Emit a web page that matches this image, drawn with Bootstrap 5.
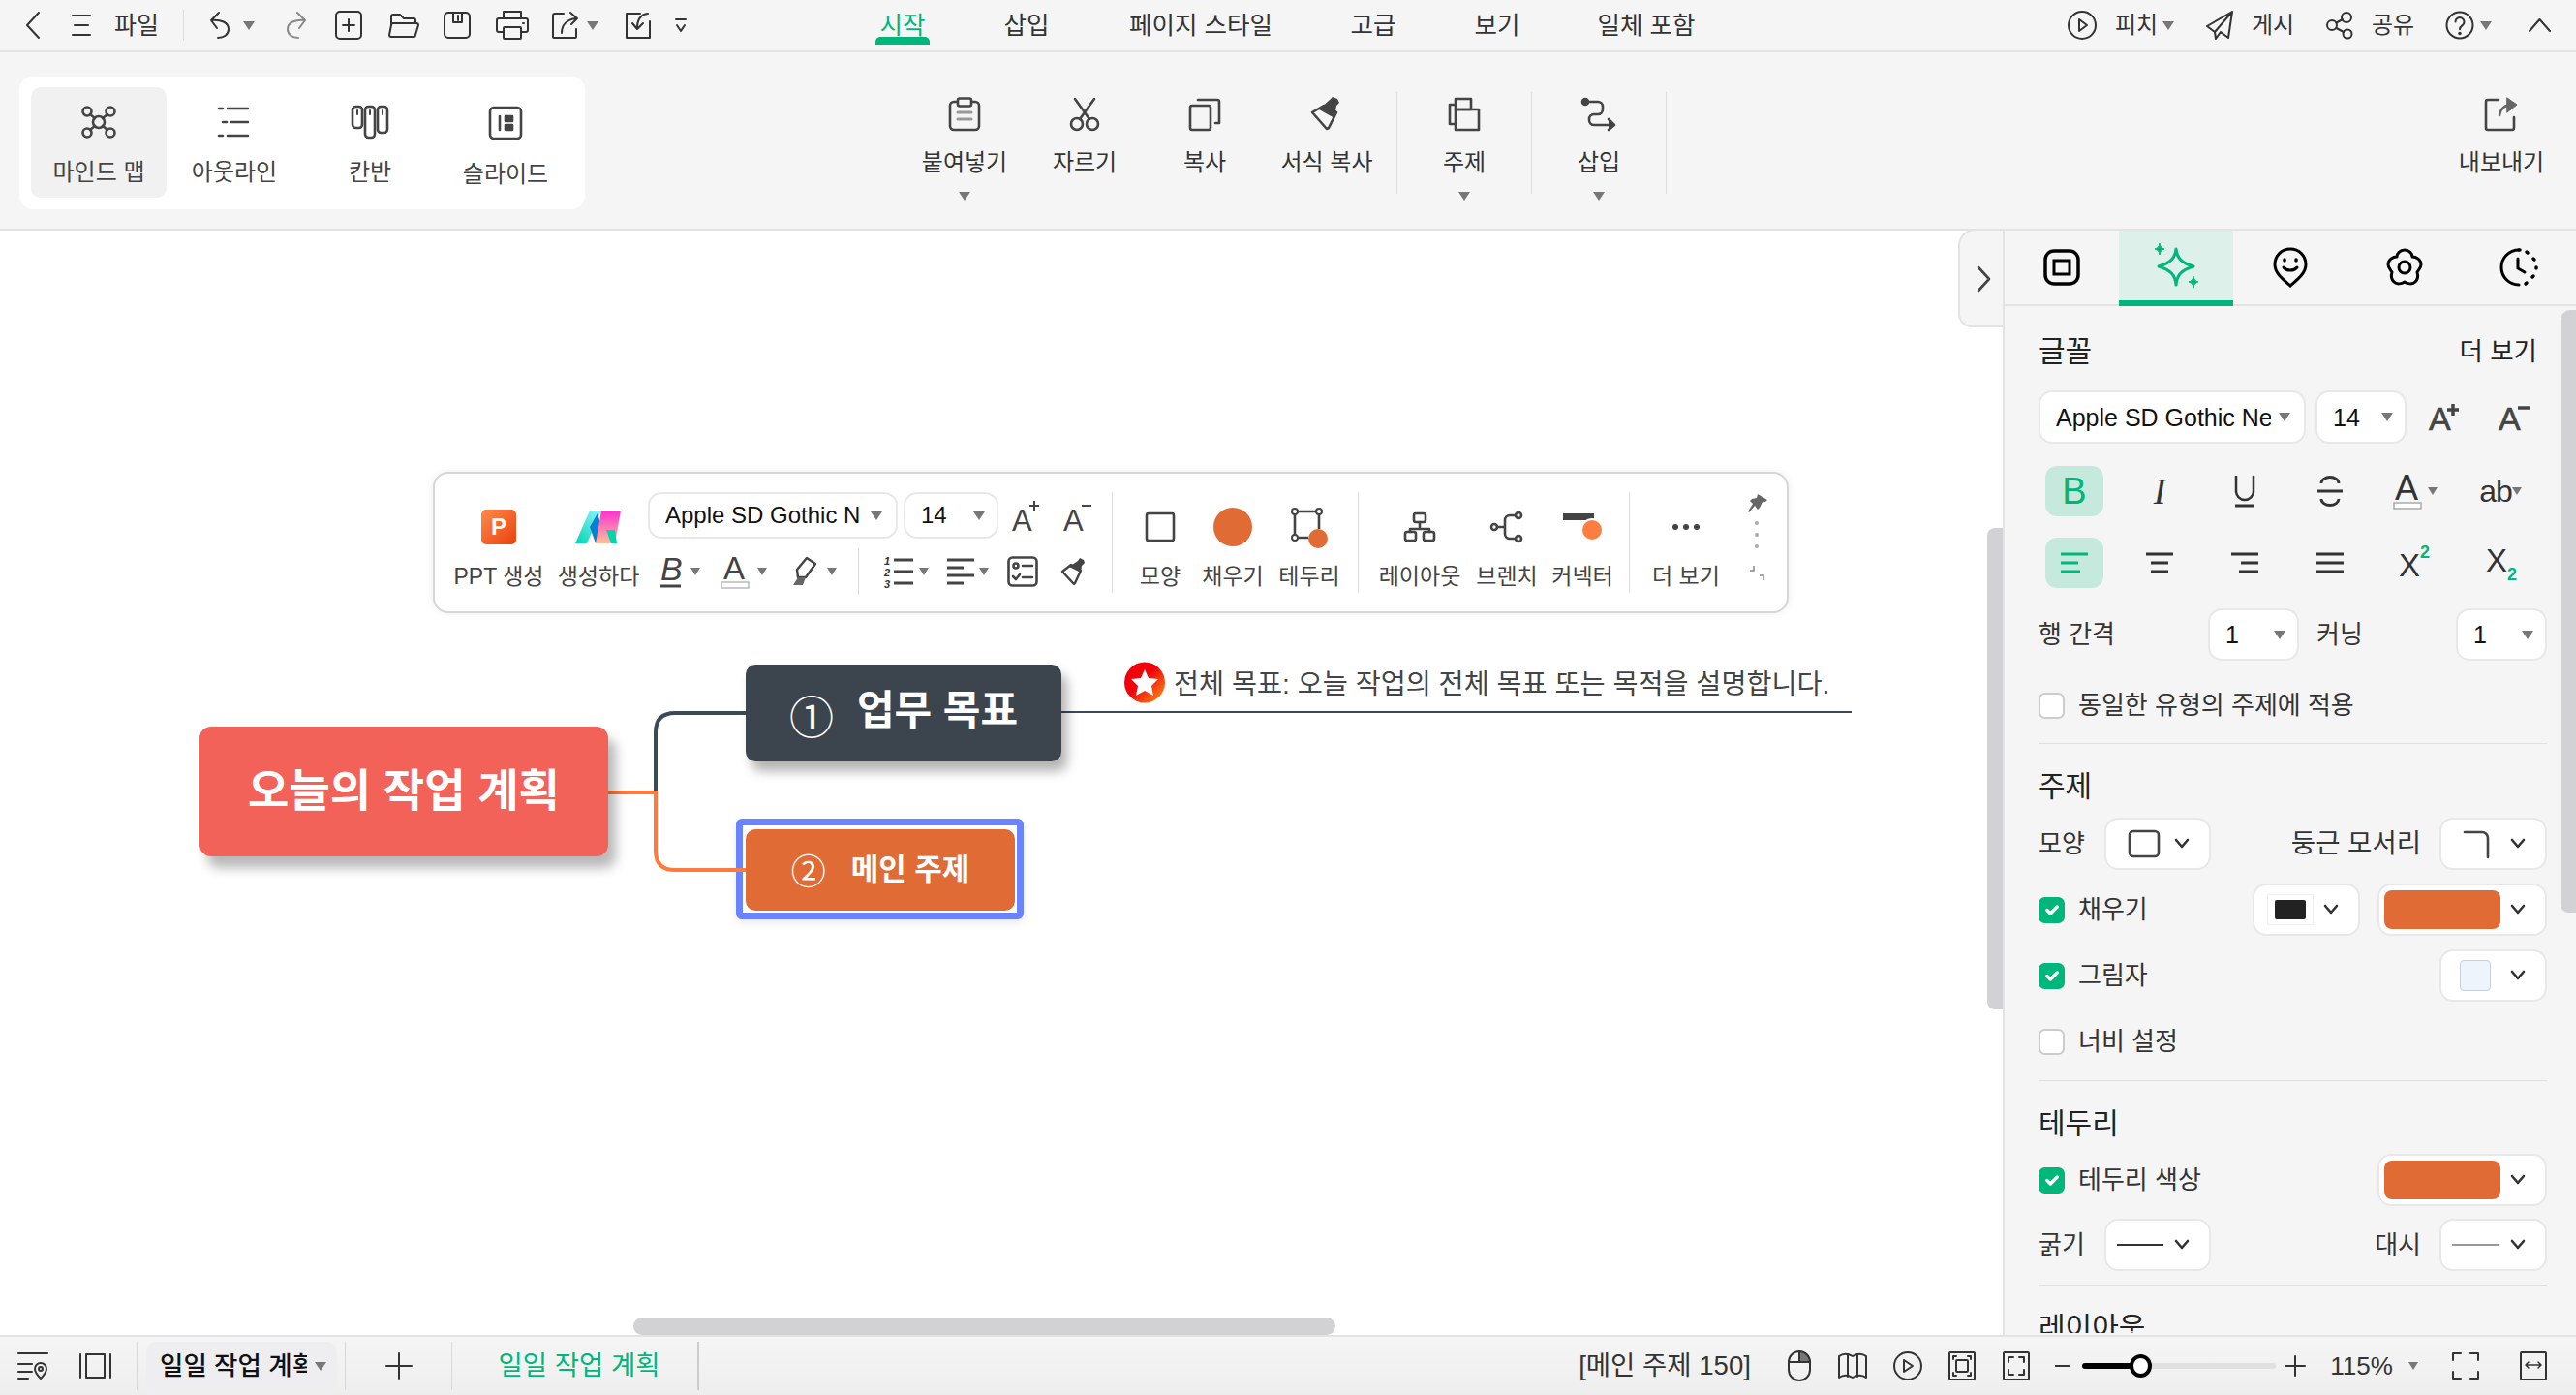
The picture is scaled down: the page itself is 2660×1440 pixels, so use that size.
<!DOCTYPE html>
<html lang="ko">
<head>
<meta charset="utf-8">
<title>일일 작업 계획</title>
<link href="https://cdn.jsdelivr.net/npm/bootstrap@5.3.0/dist/css/bootstrap.min.css" rel="stylesheet">
<style>
html,body{height:100%;margin:0;overflow:hidden}
body{font-family:"Liberation Sans","Noto Sans CJK KR",sans-serif;font-size:24px;color:#333;background:#f5f5f5;line-height:30px}
svg{display:block;flex-shrink:0;overflow:visible}
.ic{fill:none;stroke:#333;stroke-width:2;stroke-linecap:round;stroke-linejoin:round}
.ig{fill:none;stroke:#444;stroke-width:2.6;stroke-linecap:round;stroke-linejoin:round}
.ml4{margin-left:4px}.ml6{margin-left:6px}.ml7{margin-left:7px}.ml8{margin-left:8px}.ml10{margin-left:10px}.ml12{margin-left:12px}.ml13{margin-left:13px}.ml14{margin-left:14px}.ml15{margin-left:15px}.ml16{margin-left:16px}.ml17{margin-left:17px}.ml18{margin-left:18px}.ml19{margin-left:19px}.ml20{margin-left:20px}.ml21{margin-left:21px}.ml22{margin-left:22px}.ml23{margin-left:23px}.ml24{margin-left:24px}.ml25{margin-left:25px}.ml26{margin-left:26px}.ml27{margin-left:27px}.ml28{margin-left:28px}.ml29{margin-left:29px}.ml30{margin-left:30px}.ml32{margin-left:32px}.ml33{margin-left:33px}.ml35{margin-left:35px}.ml38{margin-left:38px}.ml40{margin-left:40px}.ml41{margin-left:41px}.ml42{margin-left:42px}.ml47{margin-left:47px}.ml70{margin-left:70px}.ml71{margin-left:71px}.ml72{margin-left:72px}
.w44{width:44px}.w46{width:46px}.w56{width:56px}.w57{width:57px}.w64{width:64px}.w68{width:68px}.w70{width:70px}.w74{width:74px}.w86{width:86px}.w90{width:90px}.w110{width:110px}.w160{width:160px}.w168{width:168px}.w178{width:178px}
.txt-cell{white-space:nowrap;text-align:center;flex-shrink:0;display:flex;justify-content:center}
.tri{width:0;height:0;border-left:6px solid transparent;border-right:6px solid transparent;border-top:9px solid #777;flex-shrink:0}
.tri-s{border-left-width:5px;border-right-width:5px;border-top-width:8px}
.vsep{width:1px;background:#dcdcdc;flex-shrink:0}

.topbar{height:54px;border-bottom:2px solid #e3e3e3;background:#f5f5f5;flex-shrink:0}
.top-left{width:904px;flex-shrink:0}
.top-sep{height:32px}
.tab-on{position:relative;color:#00b67a}
.tab-on::after{content:"";position:absolute;left:0;right:0;top:38px;height:8px;background:#00b67a;border-radius:5px 5px 0 0}
.tab-item{font-size:25.5px;line-height:52px;height:46px;margin-top:-6px}
.top-right{margin-left:380px}
.top-name{font-size:25px}

.ribbon{height:184px;border-bottom:2px solid #e3e3e3;background:#f5f5f5;flex-shrink:0}
.mode-card{margin:25px 0 0 20px;width:584px;height:137px;background:#fff;border-radius:14px;padding:11px 12px}
.mode-item{width:140px;height:114px;border-radius:10px;padding-top:19px;color:#444;font-size:24px}
.mode-on{background:#f1f1f1}
.mode-item span{margin-top:20px;line-height:30px}
.rib-group{margin-left:330px}
.rib-item{padding-top:46px;width:124px;color:#333;font-size:24px}
.rib-item svg{height:36px}
.rib-item span{margin-top:17px;line-height:30px;white-space:nowrap}
.rib-item .tri{margin-top:15px}
.rib-wide{width:128px}
.rib-topic{width:138px}
.rib-export{width:110px;margin-right:22px}
.rib-sep{height:105px;margin-top:41px}
.rib-sep-first{margin-left:8px}

.work{flex:1 1 auto;min-height:0}
.canvas-wrap{width:2068px;background:#fff;flex-shrink:0;position:relative;overflow:hidden}
.side{width:592px;flex-shrink:0;background:#f5f5f5;border-left:2px solid #e3e3e3;position:relative;overflow:hidden}

.side-handle{position:absolute;left:2022px;top:-2px;width:48px;height:102px;background:#f5f5f5;border:2px solid #e3e3e3;border-right:0;border-radius:18px 0 0 14px}
.side-handle svg{position:absolute;left:17px;top:37px}
.scroll-v{position:absolute;left:2052px;top:307px;width:16px;height:497px;background:#d2d2d4;border-radius:8px 0 0 8px}
.scroll-h{position:absolute;left:654px;top:1122px;width:725px;height:18px;background:#d2d2d4;border-radius:9px}
.links{position:absolute;left:0;top:0}
.node{position:absolute;color:#fff;font-weight:700;white-space:nowrap}
.node-root{left:206px;top:512px;width:422px;height:134px;background:#f26259;border-radius:12px;box-shadow:8px 12px 12px rgba(0,0,0,.28);font-size:46px;padding-bottom:2px}
.node-goal{left:770px;top:448px;width:326px;height:100px;background:#3c454e;border-radius:10px;box-shadow:6px 10px 12px rgba(0,0,0,.3);font-size:42px;padding-bottom:5px}
.node-main{left:770px;top:618px;width:278px;height:84px;background:#e06b35;border-radius:10px;font-size:31px}
.num-a{font-weight:400;font-size:46px;line-height:46px;margin-right:24px;margin-top:15px}
.num-b{font-weight:400;font-size:36px;line-height:36px;margin-right:26px;margin-top:6px}
.sel-frame{position:absolute;left:760px;top:607px;width:297px;height:104px;border:7px solid #6a84ff;border-radius:6px;background:#fff;box-shadow:0 4px 8px rgba(0,0,0,.08)}
.note-star{position:absolute;left:1161px;top:445px}
.note-text{position:absolute;left:1212px;top:448px;font-size:28.3px;line-height:40px;color:#444;white-space:nowrap}

.float-bar{position:absolute;left:447px;top:249px;width:1400px;height:146px;background:#fff;border:2px solid #d6d6d6;border-radius:16px;box-shadow:0 0 8px rgba(0,0,0,.08);color:#444;font-size:23px}
.fb-col{padding-top:35px;flex-shrink:0}
.fb-ico{height:40px}
.fb-col span{margin-top:16px;line-height:30px;white-space:nowrap}
.fb-ppt{margin-top:0;width:36px;height:36px;border-radius:5px;background:linear-gradient(135deg,#ff8a4a,#e8410f);color:#fff;font-weight:700;font-size:24px;line-height:36px;text-align:center}
.fb-fonts{width:479px;padding-top:19px;flex-shrink:0}
.fb-row2{margin-top:9px;height:50px}
.fb-sep{height:104px;margin-top:19px}
.fb-inner-sep{height:48px}
.pick{background:#fff;border:2px solid #e8e8e8;border-radius:14px;flex-shrink:0;color:#111}
.pick-f1{width:258px;height:48px;padding:0 14px 0 16px;font-size:24px}
.pick-f2{width:98px;height:48px;padding:0 12px 0 16px;font-size:24px}
.clip-t{overflow:hidden;white-space:nowrap;flex:1 1 auto;min-width:0}
.lettr{font-family:"Liberation Sans",sans-serif}
.fb-pin{margin-left:25px;padding-top:21px;flex-shrink:0}

.side-tabs{height:78px;border-bottom:2px solid #e3e3e3;flex-shrink:0}
.side-tab{flex:1 1 0}
.side-tab-on{background:#ddf0ea;border-bottom:6px solid #00b67a;height:78px}
.side-body{padding:32px 30px 0 35px;height:1060px;overflow:hidden;font-size:26px;color:#333;line-height:30px}
.side-thumb{position:absolute;right:0;top:0;margin-top:82px;width:16px;height:622px;background:#d2d2d4;border-radius:10px 0 0 8px}
.head{font-size:30px;color:#222;line-height:30px}
.more{font-size:26.500px;margin-right:10px}
.wide-t{font-size:27.5px}
.lbl-s{width:50px;flex-shrink:0;white-space:nowrap}
.gap-a{margin-top:25px}.gap-b{margin-top:23px}.gap-c{margin-top:22px}.gap-d{margin-top:21px}.gap-e{margin-top:31px}.gap-f{margin-top:24px}.gap-g{margin-top:29px}.gap-h{margin-top:17px}.gap-i{margin-top:14px}.gap-j{margin-top:26px}.gap-k{margin-top:25px}.gap-l{margin-top:16px}.gap-m{margin-top:13px}
.rule{height:1px;background:#e0e0e0}
.p-f1{width:276px;height:55px;padding:0 14px 0 16px;font-size:25px}
.p-f2{width:94px;height:55px;padding:0 12px 0 16px;font-size:25px}
.p-n{width:94px;height:54px;padding:0 12px 0 16px;font-size:25px}
.p-s{width:110px;height:54px}
.p-d{width:111px;height:54px}
.p-c{width:175px;height:54px}
.fmt-row{padding-left:7px;gap:28px;height:52px}
.fmt{width:60px;height:52px;border-radius:12px;font-size:38px;line-height:52px;color:#333;flex-shrink:0}
.fmt-on{background:#c6e9dd;color:#00b67a}
.serif-i{font-family:"Liberation Serif",serif;font-style:italic}
.ab{font-size:32px;letter-spacing:-1px}
.ck{width:27px;height:27px;margin:0!important;border-radius:5px;border:2px solid #ccc;background-color:#fff;flex-shrink:0;float:none}
.ck:checked{background-color:#00b67a;border-color:#00b67a}
.swatch-big{width:120px;height:40px;border-radius:8px;background:#e06b35}
.sw-black{width:48px;height:32px;border:1px solid #f0f0f0;padding:5px 7px}
.sw-black i{display:block;height:100%;background:#222;border-radius:2px}
.sw-blue{width:32px;height:32px;background:#eef4fc;border:1px solid #c8d0da;border-radius:4px}
.chev-s{margin-right:20px}
.pad-l{padding-left:22px}
.pad-m{padding-left:5px}
.pad-c{padding-left:13px}
.pad-x{padding-left:19px}
.pad-n{padding-left:11px}

.botbar{height:62px;border-top:2px solid #e3e3e3;background:linear-gradient(#f5f5f5,#eee);flex-shrink:0;font-size:27.5px;color:#333}
.bot-sep{height:50px;background:#d8d8d8}
.bot-sep-dark{height:50px;width:2px;background:#ccc}
.sheet-tab{width:197px;height:50px;background:#eeeef0;border-radius:10px;padding:0 11px 0 14px;margin-left:9px;font-weight:500;color:#111;flex-shrink:0;font-size:26.5px}
.green-t{color:#00b67a}
.slider{width:200px;height:6px;background:#e0e0e0;border-radius:3px;position:relative;flex-shrink:0}
.slider-fill{width:60px;height:6px;background:#000;border-radius:3px}
.slider-thumb{position:absolute;left:49px;top:-9px;width:23px;height:24px;border:4px solid #000;border-radius:50%;background:#fff}
.end-gap{margin-right:30px}
.zoom-t{font-size:26px}
</style>
</head>
<body>
<svg width="0" height="0" class="position-absolute">
  <defs>
    <symbol id="chev" viewBox="0 0 16 12"><polyline points="2,2 8,9 14,2" fill="none" stroke="#333" stroke-width="2.6" stroke-linecap="round" stroke-linejoin="round"/></symbol>
    <linearGradient id="starG" x1="0" y1="0" x2="1" y2="1"><stop offset=".45" stop-color="#f0040a"/><stop offset="1" stop-color="#ff9a1a"/></linearGradient>
    <linearGradient id="mA" x1="0" y1="1" x2=".7" y2="0"><stop offset="0" stop-color="#00d5b0"/><stop offset="1" stop-color="#7ff0f5"/></linearGradient>
    <linearGradient id="mB" x1="0" y1="0" x2="0" y2="1"><stop offset="0" stop-color="#ff2fd0"/><stop offset="1" stop-color="#ffc19a"/></linearGradient>
  </defs>
</svg>
<div class="d-flex flex-column vh-100">

  <!-- top bar -->
  <div class="topbar d-flex align-items-center">
    <div class="top-left d-flex align-items-center">
      <svg class="ic ml26" width="16" height="28" viewBox="0 0 16 28"><polyline points="14,1 2,14 14,27"/></svg>
      <svg class="ic ml32" width="20" height="24" viewBox="0 0 20 24"><path d="M1 2h18M3 12h14M1 22h18"/></svg>
      <span class="ml24 w46 txt-cell top-name">파일</span>
      <div class="vsep top-sep ml25"></div>
      <svg class="ic ml25" width="26" height="28" viewBox="0 0 26 28"><path d="M11 1 3 9l6 8M3 9c10-1 18 2 18 9 0 6-5 9-11 9"/></svg>
      <div class="tri ml10"></div>
      <svg class="ml29" width="26" height="28" viewBox="0 0 26 28" fill="none" stroke="#888" stroke-width="2" stroke-linecap="round" stroke-linejoin="round"><path d="M15 1l8 8-6 8M23 9C13 8 5 11 5 18c0 6 5 9 11 9"/></svg>
      <svg class="ic ml28" width="28" height="30" viewBox="0 0 28 30"><rect x="1" y="1" width="26" height="28" rx="4"/><path d="M14 9v12M8 15h12"/></svg>
      <svg class="ic ml27" width="32" height="26" viewBox="0 0 32 26"><path d="M3 12V4a2 2 0 0 1 2-2h7l4 4h10a2 2 0 0 1 2 2v3"/><path d="M5 11h24a2 2 0 0 1 2 2l-3 10a2 2 0 0 1-2 2H3a2 2 0 0 1-2-2l2-10a2 2 0 0 1 2-2z"/></svg>
      <svg class="ic ml25" width="28" height="28" viewBox="0 0 28 28"><rect x="1" y="1" width="26" height="26" rx="4"/><path d="M10 1v10h9V1M15 4v5"/></svg>
      <svg class="ic ml26" width="34" height="30" viewBox="0 0 34 30"><path d="M8 8V1h18v7M8 22H3a2 2 0 0 1-2-2V10a2 2 0 0 1 2-2h28a2 2 0 0 1 2 2v10a2 2 0 0 1-2 2h-5"/><rect x="8" y="17" width="18" height="12" rx="1"/><path d="M28 13h1"/></svg>
      <svg class="ic ml24" width="28" height="28" viewBox="0 0 28 28"><path d="M12 2H3a2 2 0 0 0-2 2v22a1 1 0 0 0 1 1h22a1 1 0 0 0 1-1v-8"/><path d="M10 22c0-8 5-14 15-15M19 1l7 6-6 6"/></svg>
      <div class="tri ml8"></div>
      <svg class="ic ml27" width="28" height="28" viewBox="0 0 28 28"><path d="M16 2H2v25h24V10"/><path d="M24 2c-8 1-11 6-11 15M8 12l5 6 6-6"/></svg>
      <svg class="ic ml25" width="10" height="16" viewBox="0 0 10 16"><path d="M0 2h10M1 8l4 6 4-6"/></svg>
    </div>
    <div class="d-flex align-items-center">
      <div class="tab-item tab-on w56 txt-cell">시작</div>
      <div class="tab-item w56 txt-cell ml72">삽입</div>
      <div class="tab-item w160 txt-cell ml72">페이지 스타일</div>
      <div class="tab-item w56 txt-cell ml70">고급</div>
      <div class="tab-item w56 txt-cell ml72">보기</div>
      <div class="tab-item w110 txt-cell ml71">일체 포함</div>
    </div>
    <div class="top-right d-flex align-items-center">
      <svg class="ic" width="30" height="30" viewBox="0 0 30 30"><circle cx="15" cy="15" r="14"/><path d="M12 9l8 6-8 6z"/></svg>
      <span class="ml18 w46 txt-cell">피치</span>
      <div class="tri ml4"></div>
      <svg class="ic ml33" width="28" height="30" viewBox="0 0 28 30"><path d="M27 1 1 16l8 6zM27 1l-4 27-8-6M27 1 9 22l1 7 5-7"/></svg>
      <span class="ml18 w46 txt-cell">게시</span>
      <svg class="ic ml32" width="28" height="28" viewBox="0 0 28 28"><circle cx="6" cy="14" r="5"/><circle cx="21" cy="6" r="5"/><circle cx="22" cy="23" r="4.5"/><path d="M10.5 11.5 17 8M10.5 17l7.500 4"/></svg>
      <span class="ml18 w46 txt-cell">공유</span>
      <svg class="ic ml32" width="28" height="30" viewBox="0 0 28 30" stroke-width="1.6"><circle cx="14" cy="15" r="13.500"/><path d="M9.500 11.500a4.500 4.500 0 1 1 7 3.800c-1.700 1.100-2.500 2-2.500 4"/><circle cx="14" cy="23.500" r=".8" fill="#333"/></svg>
      <div class="tri ml7"></div>
      <svg class="ic ml38" width="23" height="14" viewBox="0 0 23 14"><polyline points="1,13 11.500,1 22,13"/></svg>
    </div>
  </div>

  <!-- ribbon -->
  <div class="ribbon d-flex">
    <div class="mode-card d-flex flex-shrink-0">
      <div class="mode-item mode-on d-flex flex-column align-items-center">
        <svg class="ig" width="36" height="34" viewBox="0 0 36 34"><circle cx="18" cy="17" r="6"/><circle cx="6" cy="6" r="4.500"/><circle cx="30" cy="6" r="4.500"/><circle cx="6" cy="28" r="4.500"/><circle cx="30" cy="28" r="4.500"/><path d="M9 9l5 4M27 9l-5 4M9 25l5-4M27 25l-5-4"/></svg>
        <span>마인드 맵</span>
      </div>
      <div class="mode-item d-flex flex-column align-items-center">
        <svg class="ig" width="36" height="34" viewBox="0 0 36 34"><path d="M2 3h4M11 3h21M6 17h4M15 17h17M2 31h4M11 31h21"/></svg>
        <span>아웃라인</span>
      </div>
      <div class="mode-item d-flex flex-column align-items-center">
        <svg class="ig" width="40" height="34" viewBox="0 0 40 34"><rect x="2" y="1" width="10" height="22" rx="3.500"/><rect x="15" y="1" width="10" height="32" rx="3.500"/><rect x="28" y="1" width="10" height="27" rx="3.500"/><path d="M7 5v4M20 5v4M33 5v4" stroke-width="2"/></svg>
        <span>칸반</span>
      </div>
      <div class="mode-item d-flex flex-column align-items-center">
        <svg class="ig" width="36" height="36" viewBox="0 0 36 36"><rect x="2" y="2" width="32" height="32" rx="4"/><path d="M12 11v14"/><rect x="18" y="11" width="7" height="5" fill="#444"/><rect x="18" y="20" width="7" height="5" fill="#444"/></svg>
        <span>슬라이드</span>
      </div>
    </div>
    <div class="rib-group d-flex flex-shrink-0">
      <div class="rib-item d-flex flex-column align-items-center">
        <svg class="ig" width="34" height="36" viewBox="0 0 34 36"><rect x="2" y="5" width="30" height="29" rx="4"/><rect x="10" y="1.500" width="14" height="8" rx="2" fill="#f5f5f5"/><path d="M10 16h14M10 23h14" stroke="#999" stroke-width="3"/></svg>
        <span>붙여넣기</span>
        <div class="tri"></div>
      </div>
      <div class="rib-item d-flex flex-column align-items-center">
        <svg class="ig" width="32" height="36" viewBox="0 0 32 36"><circle cx="8" cy="28" r="6"/><circle cx="24" cy="28" r="6"/><path d="M11 23 26 2M21 23 6 2"/></svg>
        <span>자르기</span>
      </div>
      <div class="rib-item d-flex flex-column align-items-center">
        <svg class="ig" width="34" height="36" viewBox="0 0 34 36"><rect x="2" y="9" width="21" height="25" rx="2"/><path d="M10 3h20a2 2 0 0 1 2 2v22h-4"/></svg>
        <span>복사</span>
      </div>
      <div class="rib-item rib-wide d-flex flex-column align-items-center">
        <svg width="34" height="36" viewBox="0 0 34 36"><path d="M2 16 14 9l13 7-8 16-2 1z" fill="#f5f5f5" stroke="#444" stroke-width="2.600" stroke-linejoin="round"/><path d="M9 13 20 3l3-3 5 2 2 4-3 3-2 13z" fill="#444"/></svg>
        <span>서식 복사</span>
      </div>
      <div class="vsep rib-sep rib-sep-first"></div>
      <div class="rib-item rib-topic d-flex flex-column align-items-center">
        <svg class="ig" width="34" height="36" viewBox="0 0 34 36" stroke="#555"><rect x="8" y="2" width="16" height="11" /><rect x="8" y="13" width="24" height="21"/><path d="M8 8H2v20h6"/></svg>
        <span>주제</span>
        <div class="tri"></div>
      </div>
      <div class="vsep rib-sep"></div>
      <div class="rib-item rib-topic d-flex flex-column align-items-center">
        <svg class="ig" width="36" height="36" viewBox="0 0 36 36"><circle cx="4" cy="5" r="3" fill="#444"/><path d="M4 5h13a5 5 0 0 1 5 5v3a5 5 0 0 1-5 5h-4a5 5 0 0 0-5 5v1a5 5 0 0 0 5 5h18"/><path d="M28 23l6 6-6 5" fill="#444"/></svg>
        <span>삽입</span>
        <div class="tri"></div>
      </div>
      <div class="vsep rib-sep"></div>
    </div>
    <div class="rib-item rib-export d-flex flex-column align-items-center ms-auto">
      <svg class="ig" width="36" height="36" viewBox="0 0 36 36"><path d="M15 3H4a2 2 0 0 0-2 2v27a2 2 0 0 0 2 2h25a2 2 0 0 0 2-2V21"/><path d="M16 19c1-7 6-11 12-11" stroke="#666"/><path d="M24 1l10 7-10 8z" fill="#666" stroke="#666" stroke-width="1"/></svg>
      <span>내보내기</span>
    </div>
  </div>

  <!-- middle -->
  <div class="work d-flex">
    <div class="canvas-wrap">
      <svg class="links" width="2068" height="1142" viewBox="0 0 2068 1142" fill="none" stroke-width="4">
        <path d="M677 580V518q0-20 20-20H770" stroke="#3c4a57"/>
        <path d="M1096 497H1912" stroke="#3c4a57" stroke-width="2"/>
      </svg>
      <div class="sel-frame"></div>
      <svg class="links" width="2068" height="1142" viewBox="0 0 2068 1142" fill="none" stroke-width="4">
        <path d="M628 580H677V640q0 20 20 20H770" stroke="#ff7a3d"/>
      </svg>
      <div class="node node-root d-flex align-items-center justify-content-center">오늘의 작업 계획</div>
      <div class="node node-goal d-flex align-items-center justify-content-center"><span class="num-a">①</span><span>업무 목표</span></div>
      <div class="node node-main d-flex align-items-center justify-content-center"><span class="num-b">②</span><span>메인 주제</span></div>
      <svg class="note-star" width="42" height="43" viewBox="0 0 42 43"><circle cx="21" cy="21.500" r="21" fill="url(#starG)"/><polygon points="21,8 25,17 35,18 28,25 30,35 21,30 12,35 14,25 7,18 17,17" fill="#fff"/></svg>
      <div class="note-text">전체 목표: 오늘 작업의 전체 목표 또는 목적을 설명합니다.</div>

      <div class="float-bar d-flex">
        <div class="fb-col w90 ml21 d-flex flex-column align-items-center">
          <div class="fb-ico d-flex align-items-center"><div class="fb-ppt">P</div></div>
          <span>PPT 생성</span>
        </div>
        <div class="fb-col w86 ml15 d-flex flex-column align-items-center">
          <div class="fb-ico d-flex align-items-center">
            <svg width="48" height="34" viewBox="0 0 48 34"><polygon points="0,34 12,34 27,0 15,0" fill="url(#mA)"/><polygon points="15,17 21,34 32,34 23,3" fill="#0a7fd0"/><polygon points="27,0 47,0 41,34 21,34" fill="url(#mB)"/><polygon points="32,20 37,34 43,34 41,20" fill="#00d5b0"/></svg>
          </div>
          <span>생성하다</span>
        </div>
        <div class="fb-fonts ml8">
          <div class="d-flex align-items-center">
            <div class="pick pick-f1 d-flex align-items-center"><span class="clip-t lettr">Apple SD Gothic N</span><div class="tri ml8"></div></div>
            <div class="pick pick-f2 d-flex align-items-center ml6"><span class="clip-t lettr">14</span><div class="tri"></div></div>
            <svg class="ml14" width="30" height="36" viewBox="0 0 30 36"><text x="0" y="34" font-size="31" font-family="Liberation Sans" fill="#444">A</text><path d="M23 3v10M18 8h10" stroke="#444" stroke-width="2"/></svg>
            <svg class="ml23" width="30" height="36" viewBox="0 0 30 36"><text x="0" y="34" font-size="31" font-family="Liberation Sans" fill="#444">A</text><path d="M19 8h10" stroke="#444" stroke-width="2"/></svg>
          </div>
          <div class="fb-row2 d-flex align-items-center">
            <svg class="ml12" width="24" height="36" viewBox="0 0 24 36"><text x="1" y="27" font-size="34" font-style="italic" font-family="Liberation Sans" fill="#444">B</text><path d="M1 33h21" stroke="#444" stroke-width="3"/></svg>
            <div class="tri ml8 tri-s"></div>
            <svg class="ml21" width="30" height="36" viewBox="0 0 30 36"><text x="3" y="26" font-size="33" font-family="Liberation Sans" fill="#444">A</text><rect x="1" y="29" width="28" height="6" fill="#fff" stroke="#bbb" stroke-width="1.500"/></svg>
            <div class="tri ml8 tri-s"></div>
            <svg class="ml26" width="26" height="32" viewBox="0 0 26 32"><path d="M15 2 24 8 14 22H6L5 14z" fill="none" stroke="#444" stroke-width="2.400" stroke-linejoin="round"/><path d="M6 22 1 30h10l3-8z" fill="#666"/></svg>
            <div class="tri ml10 tri-s"></div>
            <div class="vsep fb-inner-sep ml22"></div>
            <svg class="ml26" width="32" height="36" viewBox="0 0 32 36"><text x="0" y="11" font-size="11" font-weight="700" font-style="italic" font-family="Liberation Sans" fill="#333">1</text><text x="0" y="23" font-size="11" font-weight="700" font-style="italic" font-family="Liberation Sans" fill="#333">2</text><text x="0" y="35" font-size="11" font-weight="700" font-style="italic" font-family="Liberation Sans" fill="#333">3</text><path d="M10 6h20M10 18h20M10 30h20" stroke="#444" stroke-width="3"/></svg>
            <div class="tri ml4 tri-s"></div>
            <svg class="ml18" width="30" height="30" viewBox="0 0 30 30"><path d="M1 3h28M1 11h17M1 19h28M1 27h17" stroke="#444" stroke-width="3"/></svg>
            <div class="tri ml4 tri-s"></div>
            <svg class="ig ml19" width="32" height="32" viewBox="0 0 32 32"><rect x="1.500" y="1.500" width="29" height="29" rx="4"/><circle cx="9" cy="10" r="2.500"/><path d="M16 10h10M16 22h10M6 21l3 3 4-5"/></svg>
            <svg class="ml24" width="26" height="28" viewBox="0 0 26 28"><path d="M1 14 10 7l10 6-6 13-1 1z" fill="#fff" stroke="#444" stroke-width="2.400" stroke-linejoin="round"/><path d="M8 9 17 3l2-3 4 2 1 3-3 3-1 7z" fill="#444"/></svg>
          </div>
        </div>
        <div class="vsep fb-sep"></div>
        <div class="fb-col w64 ml17 d-flex flex-column align-items-center">
          <div class="fb-ico d-flex align-items-center"><svg class="ig" width="32" height="32" viewBox="0 0 32 32"><rect x="2" y="2" width="28" height="28" rx="2"/></svg></div>
          <span>모양</span>
        </div>
        <div class="fb-col w70 ml8 d-flex flex-column align-items-center">
          <div class="fb-ico d-flex align-items-center"><svg width="40" height="40" viewBox="0 0 40 40"><circle cx="20" cy="20" r="20" fill="#e06b35"/></svg></div>
          <span>채우기</span>
        </div>
        <div class="fb-col w68 ml10 d-flex flex-column align-items-center">
          <div class="fb-ico d-flex align-items-center"><svg width="40" height="44" viewBox="0 0 40 44"><path d="M5 6h25v18M5 6v27h14" fill="none" stroke="#444" stroke-width="2.600"/><circle cx="5" cy="6" r="3" fill="#fff" stroke="#444" stroke-width="2"/><circle cx="30" cy="6" r="3" fill="#fff" stroke="#444" stroke-width="2"/><circle cx="5" cy="33" r="3" fill="#fff" stroke="#444" stroke-width="2"/><circle cx="29" cy="34" r="10" fill="#e06b35"/></svg></div>
          <span>테두리</span>
        </div>
        <div class="vsep fb-sep ml16"></div>
        <div class="fb-col w86 ml20 d-flex flex-column align-items-center">
          <div class="fb-ico d-flex align-items-center"><svg class="ig" width="34" height="32" viewBox="0 0 34 32"><rect x="11" y="2" width="12" height="9" rx="2"/><rect x="2" y="21" width="11" height="9" rx="2"/><rect x="21" y="21" width="11" height="9" rx="2"/><path d="M17 11v5M7 21v-3h20v3"/></svg></div>
          <span>레이아웃</span>
        </div>
        <div class="fb-col w70 ml12 d-flex flex-column align-items-center">
          <div class="fb-ico d-flex align-items-center"><svg class="ig" width="34" height="32" viewBox="0 0 34 32"><circle cx="4" cy="16" r="3"/><circle cx="29" cy="4" r="3"/><circle cx="29" cy="28" r="3"/><path d="M7 16h7M26 4h-6a5 5 0 0 0-5 5v14a5 5 0 0 0 5 5h6"/></svg></div>
          <span>브렌치</span>
        </div>
        <div class="fb-col w70 ml8 d-flex flex-column align-items-center">
          <div class="fb-ico d-flex align-items-center"><svg width="42" height="40" viewBox="0 0 42 40"><rect x="1" y="6" width="32" height="7" fill="#444"/><circle cx="31" cy="22" r="11" fill="#fff"/><circle cx="31" cy="23" r="10" fill="#ff7e3f"/></svg></div>
          <span>커넥터</span>
        </div>
        <div class="vsep fb-sep ml13"></div>
        <div class="fb-col w74 ml21 d-flex flex-column align-items-center">
          <div class="fb-ico d-flex align-items-center"><svg width="30" height="8" viewBox="0 0 30 8" fill="#444"><circle cx="4" cy="4" r="3"/><circle cx="15" cy="4" r="3"/><circle cx="26" cy="4" r="3"/></svg></div>
          <span>더 보기</span>
        </div>
        <div class="fb-pin d-flex flex-column align-items-center">
          <svg width="22" height="20" viewBox="0 0 22 20"><path d="M12 0l10 6-2 2-3 0-3 6-2 2-3-4-6 7-1-1 5-8-3-3 2-2 5-1z" fill="#666"/></svg>
          <svg class="mt-2" width="4" height="30" viewBox="0 0 4 30" fill="#aaa"><circle cx="2" cy="2" r="2"/><circle cx="2" cy="14" r="2"/><circle cx="2" cy="26" r="2"/></svg>
          <svg class="mt-3" width="16" height="16" viewBox="0 0 16 16" fill="none" stroke="#888" stroke-width="1.500"><path d="M1 5h4V0M15 15v-5h-4"/></svg>
        </div>
      </div>

      <div class="side-handle"><svg class="ig" width="16" height="26" viewBox="0 0 16 26"><polyline points="2,1 13,13 2,25"/></svg></div>
      <div class="scroll-v"></div>
      <div class="scroll-h"></div>
    </div>

    <div class="side d-flex flex-column">
      <div class="side-tabs d-flex">
        <div class="side-tab d-flex align-items-center justify-content-center"><svg width="38" height="38" viewBox="0 0 38 38" fill="none" stroke="#000" stroke-width="3.500"><rect x="2" y="2" width="34" height="34" rx="9"/><rect x="11" y="12" width="16" height="14" stroke-width="3"/></svg></div>
        <div class="side-tab side-tab-on d-flex align-items-center justify-content-center"><svg width="46" height="46" viewBox="0 0 46 46" fill="none" stroke="#00b67a" stroke-width="3" stroke-linejoin="round"><path d="M23 6C24 15 28 20 41 24 28 28 24 33 23 43 22 33 18 28 5 24 18 20 22 15 23 6z"/><path d="M6 0c.5 3.500 1.700 5 5 6-3.300 1-4.500 2.500-5 6-.5-3.500-1.700-5-5-6 3.300-1 4.500-2.500 5-6zM41 34c.5 3.500 1.700 5 5 6-3.300 1-4.500 2.500-5 6-.5-3.500-1.700-5-5-6 3.300-1 4.500-2.500 5-6z" fill="#00b67a" stroke-width="1"/></svg></div>
        <div class="side-tab d-flex align-items-center justify-content-center"><svg width="36" height="42" viewBox="0 0 36 42" fill="none" stroke="#000" stroke-width="3" stroke-linecap="round"><path d="M18 2C9 2 2 9 2 18c0 9 8 15 16 22 8-7 16-13 16-22C34 9 27 2 18 2z"/><path d="M11 21c3 4 11 4 14 0"/><path d="M12 13v1M24 13v1" stroke-width="3.500"/></svg></div>
        <div class="side-tab d-flex align-items-center justify-content-center"><svg width="38" height="40" viewBox="0 0 38 40" fill="none" stroke="#000" stroke-width="3" stroke-linejoin="round"><path d="M19 2c5 0 8 4 8 7 4 0 9 3 9 8 0 4-3 6-4 8 1 3 1 7-2 10-3 3-8 2-11 0-3 2-8 3-11 0-3-3-3-7-2-10-1-2-4-4-4-8 0-5 5-8 9-8 0-3 3-7 8-7z"/><circle cx="19" cy="20" r="6"/></svg></div>
        <div class="side-tab d-flex align-items-center justify-content-center"><svg width="40" height="40" viewBox="0 0 40 40" fill="none" stroke="#000" stroke-width="3" stroke-linecap="round"><path d="M20 2C10 2 2 10 2 20s8 18 18 18"/><path d="M20 2h1M28 4l1 1M35 11l1 1M38 20v1M35 29l-1 1M28 36l-1 1" stroke-width="3.500"/><path d="M19 11v10l7 4"/></svg></div>
      </div>
      <div class="side-thumb position-absolute"></div>
      <div class="side-body">
        <div class="d-flex justify-content-between align-items-center head"><span>글꼴</span><span class="more">더 보기</span></div>
        <div class="d-flex align-items-center gap-a">
          <div class="pick p-f1 d-flex align-items-center"><span class="clip-t lettr">Apple SD Gothic Neo</span><div class="tri ml8"></div></div>
          <div class="pick p-f2 d-flex align-items-center ml10"><span class="clip-t lettr">14</span><div class="tri"></div></div>
          <svg class="ml23" width="32" height="30" viewBox="0 0 32 30"><text x="0" y="28" font-size="34" font-family="Liberation Sans" font-weight="400" fill="#444" stroke="#444" stroke-width=".6">A</text><path d="M25 1v12M19 7h12" stroke="#444" stroke-width="3.500"/></svg>
          <svg class="ml40" width="32" height="30" viewBox="0 0 32 30"><text x="0" y="28" font-size="34" font-family="Liberation Sans" fill="#444" stroke="#444" stroke-width=".6">A</text><path d="M20 5h12" stroke="#444" stroke-width="3.500"/></svg>
        </div>
        <div class="d-flex align-items-center fmt-row gap-b">
          <div class="fmt fmt-on text-center">B</div>
          <div class="fmt text-center serif-i">I</div>
          <div class="fmt text-center d-flex justify-content-center align-items-center"><svg width="22" height="34" viewBox="0 0 22 34" fill="none" stroke="#333" stroke-width="2.500"><path d="M2 1v16a9 9 0 0 0 18 0V1"/><path d="M1 32h20" stroke-width="3"/></svg></div>
          <div class="fmt text-center d-flex justify-content-center align-items-center"><svg width="28" height="32" viewBox="0 0 28 32" fill="none" stroke="#333" stroke-width="2.800"><path d="M23 8a9 6.500 0 0 0-18 0M5 24a9 6.500 0 0 0 18 0"/><path d="M1 16h26" stroke-width="3"/></svg></div>
          <div class="fmt d-flex align-items-center justify-content-center"><svg width="30" height="38" viewBox="0 0 30 38"><text x="2" y="28" font-size="36" font-family="Liberation Sans" fill="#333">A</text><rect x="1" y="31" width="28" height="6" fill="#fff" stroke="#aaa" stroke-width="1.500"/></svg><div class="tri ml6 tri-s flex-shrink-0"></div></div>
          <div class="fmt ab d-flex align-items-center justify-content-center"><span>ab</span><div class="tri tri-s flex-shrink-0"></div></div>
        </div>
        <div class="d-flex align-items-center fmt-row gap-c">
          <div class="fmt fmt-on d-flex align-items-center justify-content-center"><svg width="28" height="22" viewBox="0 0 28 22" stroke="#00b67a" stroke-width="3"><path d="M0 2h28M0 11h18M0 20h20"/></svg></div>
          <div class="fmt d-flex align-items-center justify-content-center"><svg width="28" height="22" viewBox="0 0 28 22" stroke="#333" stroke-width="3"><path d="M0 2h28M5 11h18M5 20h18"/></svg></div>
          <div class="fmt d-flex align-items-center justify-content-center"><svg width="28" height="22" viewBox="0 0 28 22" stroke="#333" stroke-width="3"><path d="M0 2h28M10 11h18M8 20h20"/></svg></div>
          <div class="fmt d-flex align-items-center justify-content-center"><svg width="28" height="22" viewBox="0 0 28 22" stroke="#333" stroke-width="3"><path d="M0 2h28M0 11h28M0 20h28"/></svg></div>
          <div class="fmt d-flex align-items-center justify-content-center"><svg width="34" height="36" viewBox="0 0 34 36"><text x="0" y="32" font-size="33" font-family="Liberation Sans" fill="#333">X</text><text x="22" y="13" font-size="18" font-weight="700" font-family="Liberation Sans" fill="#00b67a">2</text></svg></div>
          <div class="fmt d-flex align-items-center justify-content-center"><svg width="34" height="36" viewBox="0 0 34 36"><text x="2" y="27" font-size="33" font-family="Liberation Sans" fill="#333">X</text><text x="24" y="36" font-size="18" font-weight="700" font-family="Liberation Sans" fill="#00b67a">2</text></svg></div>
        </div>
        <div class="d-flex align-items-center gap-d">
          <span class="flex-grow-1">행 간격</span>
          <div class="pick p-n d-flex align-items-center"><span class="clip-t lettr">1</span><div class="tri"></div></div>
          <span class="ml18 flex-grow-1">커닝</span>
          <div class="pick p-n d-flex align-items-center"><span class="clip-t lettr">1</span><div class="tri"></div></div>
        </div>
        <div class="d-flex align-items-center gap-e">
          <input class="form-check-input ck" type="checkbox"><span class="ml14">동일한 유형의 주제에 적용</span>
        </div>
        <div class="rule gap-f"></div>
        <div class="head gap-g">주제</div>
        <div class="d-flex align-items-center gap-h">
          <span class="lbl-s">모양</span>
          <div class="pick p-s d-flex align-items-center justify-content-between ml18 pad-l"><svg class="ig" width="34" height="30" viewBox="0 0 34 30"><rect x="2" y="2" width="30" height="26" rx="4"/></svg><svg class="chev-s" width="16" height="12"><use href="#chev"/></svg></div>
          <span class="ms-auto wide-t">둥근 모서리</span>
          <div class="pick p-d d-flex align-items-center justify-content-between ml19 pad-l"><svg class="ig" width="28" height="30" viewBox="0 0 28 30"><path d="M2 3h18a6 6 0 0 1 6 6v20"/></svg><svg class="chev-s" width="16" height="12"><use href="#chev"/></svg></div>
        </div>
        <div class="d-flex align-items-center gap-i">
          <input class="form-check-input ck" type="checkbox" checked><span class="ml14">채우기</span>
          <div class="pick p-d d-flex align-items-center justify-content-between ms-auto pad-c"><div class="sw-black"><i></i></div><svg class="chev-s" width="16" height="12"><use href="#chev"/></svg></div>
          <div class="pick p-c d-flex align-items-center justify-content-between ml18 pad-m"><div class="swatch-big"></div><svg class="chev-s" width="16" height="12"><use href="#chev"/></svg></div>
        </div>
        <div class="d-flex align-items-center gap-i">
          <input class="form-check-input ck" type="checkbox" checked><span class="ml14">그림자</span>
          <div class="pick p-d d-flex align-items-center justify-content-between ms-auto pad-x"><div class="sw-blue"></div><svg class="chev-s" width="16" height="12"><use href="#chev"/></svg></div>
        </div>
        <div class="d-flex align-items-center gap-j">
          <input class="form-check-input ck" type="checkbox"><span class="ml14">너비 설정</span>
        </div>
        <div class="rule gap-k"></div>
        <div class="head gap-g">테두리</div>
        <div class="d-flex align-items-center gap-l">
          <input class="form-check-input ck" type="checkbox" checked><span class="ml14">테두리 색상</span>
          <div class="pick p-c d-flex align-items-center justify-content-between ms-auto pad-m"><div class="swatch-big"></div><svg class="chev-s" width="16" height="12"><use href="#chev"/></svg></div>
        </div>
        <div class="d-flex align-items-center gap-m">
          <span class="lbl-s">굵기</span>
          <div class="pick p-s d-flex align-items-center justify-content-between ml18 pad-n"><svg width="48" height="4" viewBox="0 0 48 4"><path d="M0 2h48" stroke="#333" stroke-width="2"/></svg><svg class="chev-s" width="16" height="12"><use href="#chev"/></svg></div>
          <span class="ms-auto">대시</span>
          <div class="pick p-d d-flex align-items-center justify-content-between ml19 pad-n"><svg width="48" height="4" viewBox="0 0 48 4"><path d="M0 2h48" stroke="#333" stroke-width="1"/></svg><svg class="chev-s" width="16" height="12"><use href="#chev"/></svg></div>
        </div>
        <div class="rule gap-i"></div>
        <div class="head gap-g">레이아웃</div>
      </div>
    </div>
  </div>

  <!-- bottom bar -->
  <div class="botbar d-flex align-items-center">
    <svg class="ic ml18" width="32" height="30" viewBox="0 0 32 30"><path d="M1 2h30M1 13h14M1 21h14M1 28h10"/><path d="M24 28c-4-4-6-7-6-10a6 6 0 0 1 12 0c0 3-2 6-6 10z"/><circle cx="24" cy="18" r="2"/></svg>
    <svg class="ic ml32" width="33" height="26" viewBox="0 0 33 26" stroke-width="1.600"><path d="M1 1v24M32 1v24"/><rect x="7" y="1" width="19" height="24"/></svg>
    <div class="vsep bot-sep ml26"></div>
    <div class="sheet-tab d-flex align-items-center"><span class="clip-t">일일 작업 계획</span><div class="tri ml8"></div></div>
    <div class="vsep bot-sep ml8"></div>
    <svg class="ic ml42" width="26" height="26" viewBox="0 0 26 26" stroke-width="1.800"><path d="M13 0v26M0 13h26"/></svg>
    <div class="vsep bot-sep ml41"></div>
    <span class="green-t ml47 w168 txt-cell">일일 작업 계획</span>
    <div class="bot-sep-dark ml38"></div>
    <div class="ms-auto d-flex align-items-center">
      <span class="w178 txt-cell">[메인 주제 150]</span>
      <svg class="ic ml38" width="24" height="32" viewBox="0 0 24 32" stroke-width="1.600"><path d="M12 1a11 11 0 0 1 11 11H12z" fill="#777"/><path d="M12 1A11 11 0 0 0 1 12v8a11 11 0 0 0 22 0v-8M1 12h22M12 1v11"/></svg>
      <svg class="ic ml28" width="30" height="28" viewBox="0 0 30 28" stroke-width="1.600"><path d="M1 4c4-3 9-3 14 0 5-3 10-3 14 0v22c-4-3-9-3-14 0-5-3-10-3-14 0zM10 2v23M20 2v23"/></svg>
      <svg class="ic ml27" width="30" height="32" viewBox="0 0 30 32" stroke-width="1.600"><circle cx="15" cy="16" r="14"/><path d="M11 10l9 6-9 6z"/></svg>
      <svg class="ic ml27" width="28" height="30" viewBox="0 0 28 30" stroke-width="1.800"><rect x="1" y="1" width="26" height="28" rx="1"/><rect x="8" y="9" width="12" height="12" rx="1"/><path d="M5 8V5h3M23 8V5h-3M5 22v3h3M23 22v3h-3"/></svg>
      <svg class="ic ml28" width="28" height="30" viewBox="0 0 28 30" stroke-width="1.800"><rect x="1" y="1" width="26" height="28" rx="1"/><path d="M6 6h5M6 6v5M22 6h-5M22 6v5M6 24h5M6 24v-5M22 24h-5M22 24v-5"/></svg>
      <svg class="ml26" width="16" height="2" viewBox="0 0 16 2"><path d="M0 1h16" stroke="#333" stroke-width="2"/></svg>
      <div class="slider ml12"><div class="slider-fill"></div><div class="slider-thumb"></div></div>
      <svg class="ic ml10" width="20" height="20" viewBox="0 0 20 20" stroke-width="1.800"><path d="M10 0v20M0 10h20"/></svg>
      <span class="ml30 w57 txt-cell zoom-t">115%</span>
      <div class="tri tri-s ml20"></div>
      <svg class="ic ml35" width="28" height="28" viewBox="0 0 28 28"><path d="M1 8V1h8M19 1h8v7M1 20v7h8M27 20v7h-8"/></svg>
      <svg class="ic ml42 end-gap flex-shrink-0" width="28" height="30" viewBox="0 0 28 30"><rect x="1" y="1" width="26" height="28" rx="1"/><path d="M6 14h16M9 11l-3 3 3 3M19 11l3 3-3 3" stroke-width="1.500"/></svg>
    </div>
  </div>
</div>
<script src="https://cdn.jsdelivr.net/npm/bootstrap@5.3.0/dist/js/bootstrap.bundle.min.js"></script>
</body>
</html>
